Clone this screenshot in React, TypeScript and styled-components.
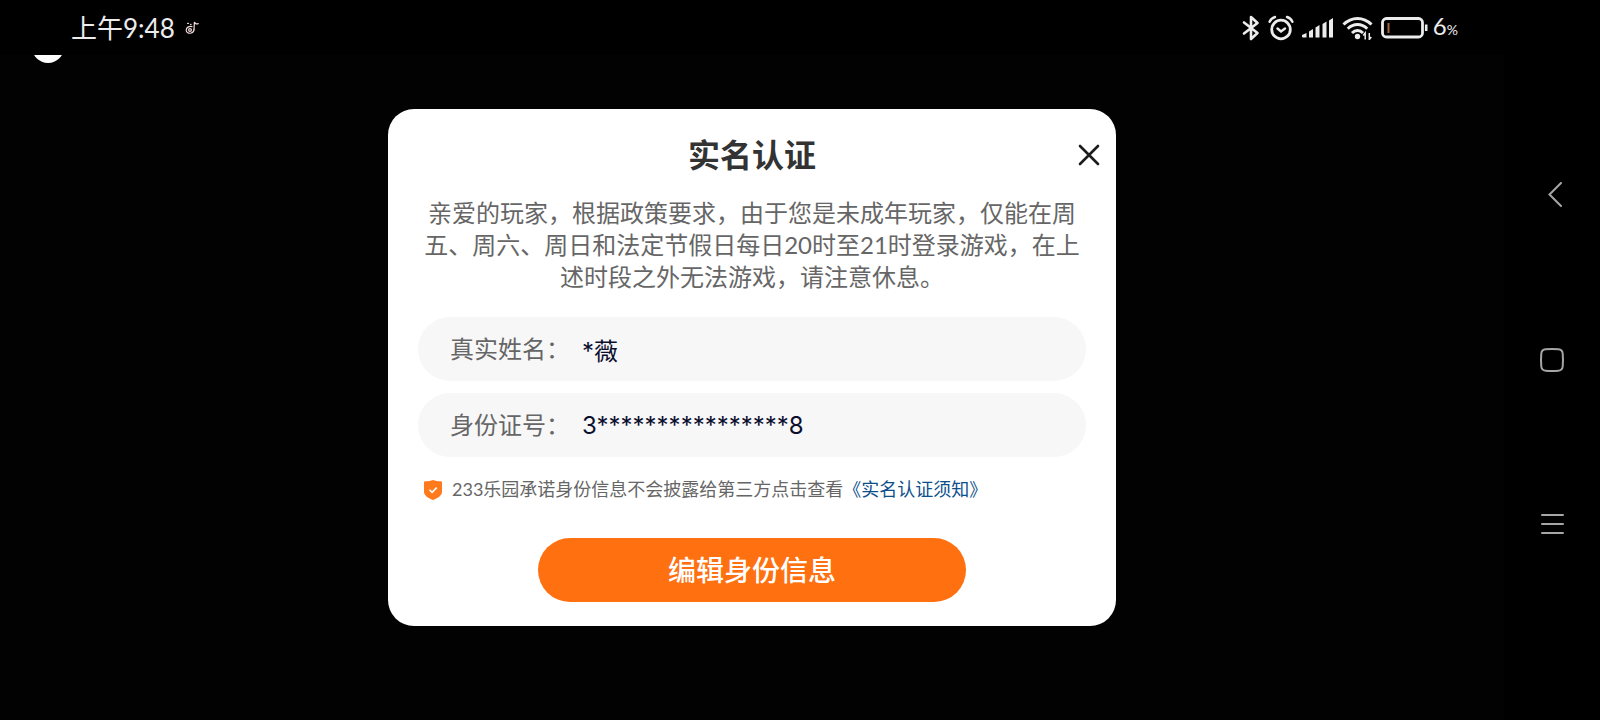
import React from 'react';
import styled, { createGlobalStyle } from 'styled-components';

const GlobalStyle = createGlobalStyle`
  *, *::before, *::after { box-sizing: border-box; }
  body {
    margin: 0;
    background: #000;
    font-family: Lato, "Noto Sans CJK SC", sans-serif;
  }
  button { font-family: inherit; }
`;

const Device = styled.div`
  display: flex;
  min-height: 100vh;
  background: #000;
`;

const Screen = styled.div`
  flex: 1;
  min-width: 0;
  display: flex;
  flex-direction: column;
`;

const StatusBar = styled.header`
  display: flex;
  align-items: center;
  justify-content: space-between;
  height: 55px;
  padding: 0 46px 0 71px;
  color: #ececec;
`;

const StatusGroup = styled.div<{ $gap: number }>`
  display: flex;
  align-items: center;
  gap: ${({ $gap }) => $gap}px;
`;

const Clock = styled.time`
  font-size: 26px;
  line-height: 32px;
`;

const BatteryLevel = styled.span`
  font-size: 24px;
  line-height: 32px;
`;

const PercentSign = styled.small`
  font-size: 14px;
`;

const Stage = styled.main`
  position: relative;
  flex: 1;
  display: flex;
  align-items: center;
  justify-content: center;
  padding: 0 24px 40px;
  overflow: hidden;
  background: #020202;
`;

const FloatingBall = styled.span`
  position: absolute;
  top: -24px;
  left: 32px;
  width: 32px;
  height: 32px;
  border-radius: 50%;
  background: #fff;
`;

const Dialog = styled.section`
  width: 100%;
  max-width: 728px;
  padding: 24px 0;
  border-radius: 26px;
  background: #fff;
`;

const DialogHeader = styled.div`
  display: grid;
  grid-template-columns: 1fr auto 1fr;
  align-items: center;
  padding: 0 12px;
`;

const Title = styled.h1`
  grid-column: 2;
  margin: 0;
  color: #333;
  font-size: 32px;
  font-weight: 700;
  line-height: 44px;
`;

const IconButton = styled.button<{ $size: number }>`
  display: flex;
  align-items: center;
  justify-content: center;
  width: ${({ $size }) => $size}px;
  height: ${({ $size }) => $size}px;
  padding: 0;
  border: 0;
  background: none;
  color: inherit;
  cursor: pointer;
`;

const CloseButton = styled(IconButton)`
  justify-self: end;
  color: #1c1c1c;
`;

const DialogBody = styled.form`
  display: flex;
  flex-direction: column;
  padding: 20px 30px 0;
`;

const Notice = styled.p`
  margin: 0 0 24px;
  color: #666;
  font-size: 24px;
  line-height: 32px;
  text-align: center;
`;

const Fields = styled.div`
  display: flex;
  flex-direction: column;
  gap: 12px;
`;

const Field = styled.label`
  display: flex;
  align-items: center;
  gap: 12px;
  height: 64px;
  padding: 0 32px;
  border-radius: 32px;
  background: #f7f7f8;
  color: #666;
  font-size: 24px;
  line-height: 32px;
`;

const FieldInput = styled.input`
  flex: 1;
  min-width: 0;
  height: 32px;
  padding: 0;
  border: 0;
  outline: 0;
  background: none;
  color: #0b0f2e;
  font-family: Inter, "Noto Sans CJK SC", sans-serif;
  font-size: 24px;
`;

const PrivacyPledge = styled.div`
  display: flex;
  align-items: center;
  gap: 10px;
  margin-top: 20px;
  padding-left: 6px;
  color: #666;
  font-size: 18px;
  line-height: 25px;
`;

const TermsLink = styled.a`
  color: #0d4f8b;
  text-decoration: none;
`;

const SubmitButton = styled.button`
  align-self: center;
  width: 100%;
  max-width: 428px;
  height: 64px;
  margin-top: 36px;
  border: 0;
  border-radius: 32px;
  background: #ff7011;
  color: #fff;
  font-size: 28px;
  font-weight: 500;
  line-height: 36px;
  cursor: pointer;
`;

const SystemNav = styled.nav`
  display: flex;
  flex: none;
  flex-direction: column;
  align-items: center;
  justify-content: center;
  gap: 117px;
  width: 96px;
  color: #a6a6a6;
`;

const NoteIcon = () => (
  <svg width="14" height="14" viewBox="0 0 14 14" fill="none" stroke="#f3dcdc" strokeWidth="1.2" strokeLinecap="round">
    <path d="M9 8.500 9.400 1c.4 1.500 1.800 2.200 3.800 1.600" />
    <path d="M7 5.600C4 4.800 1.200 6.600 1.200 9.200c0 2.400 2.600 3.600 5 2.800C8 11.400 9 10 9 8.500" />
    <circle cx="5" cy="9" r="1.400" />
    <path d="M2.600 2.400h.8M5.600 3.400h.4" />
  </svg>
);

const BluetoothIcon = () => (
  <svg width="18" height="26" viewBox="0 0 18 26" fill="none" stroke="currentColor" strokeWidth="2.600" strokeLinejoin="round" strokeLinecap="round">
    <path d="M2 7.500 15.500 18 9 24V2l6.500 6L2 18.500" />
  </svg>
);

const AlarmIcon = () => (
  <svg width="26" height="26" viewBox="0 0 26 26" fill="none" stroke="currentColor" strokeWidth="2.800" strokeLinecap="round">
    <circle cx="13" cy="14.500" r="9.300" />
    <path d="m9.500 13.500 3.500 3 4-3" strokeWidth="2.400" />
    <path d="M1.600 6.800C2.600 4.400 4.400 2.800 7 2M24.400 6.800C23.400 4.400 21.600 2.800 19 2" strokeWidth="2.400" />
  </svg>
);

const SignalIcon = () => (
  <svg width="32" height="20" viewBox="0 0 32 20" fill="currentColor">
    <path d="M0 18.500v-1.500l4.500-2v4.500H1a1 1 0 0 1-1-1Z" />
    <path d="M7 13.500 11 11v8.500H7Z" />
    <path d="M13.500 9.500 17.500 7v12.500h-4Z" />
    <path d="M20.500 6 24.500 3.500v16h-4Z" />
    <path d="M27 2.500 31 0v19.500h-4Z" />
  </svg>
);

const WifiIcon = () => (
  <svg width="31" height="24" viewBox="0 0 31 24" fill="none" stroke="currentColor" strokeWidth="3">
    <path d="M1.500 8.500C9.500.4 21.500.4 29.500 8.500" />
    <path d="M5.800 12.800C11.500 7.200 19.500 7.200 25.200 12.800" />
    <path d="M10 17c3.200-3.200 7.800-3.200 11 0" />
    <circle cx="15.500" cy="20.500" r="2.700" fill="currentColor" stroke="none" />
    <path d="M23.200 23.500V17l-2 2.500M27.300 17v6.500l2-2.500" strokeWidth="1.500" />
  </svg>
);

const BatteryIcon = () => (
  <svg width="47" height="22" viewBox="0 0 47 22" fill="none">
    <rect x="1.500" y="1.500" width="40" height="18.500" rx="4" stroke="currentColor" strokeWidth="2.800" />
    <rect x="6.500" y="6" width="2" height="10" fill="#a3653f" />
    <path d="M45.200 7.500v6.500" stroke="currentColor" strokeWidth="2.600" />
  </svg>
);

const CloseIcon = () => (
  <svg width="22" height="22" viewBox="0 0 22 22" fill="none" stroke="currentColor" strokeWidth="2.600" strokeLinecap="round">
    <path d="m2 2 18 18M20 2 2 20" />
  </svg>
);

const ShieldIcon = () => (
  <svg width="18" height="20" viewBox="0 0 18 20" fill="none">
    <path d="M9 0C11 .9 13.500 1.200 16.500 1.200c.9 0 1.500.5 1.500 1.400V11.500c0 4-3.600 6.300-9 8.500-5.400-2.200-9-4.500-9-8.500V2.600c0-.9.600-1.400 1.500-1.400C4.500 1.200 7 .9 9 0Z" fill="#ff7a1c" />
    <path d="m5.500 9.800 2.600 2.600 4.600-4.800" stroke="#fff" strokeWidth="1.600" />
  </svg>
);

const BackIcon = () => (
  <svg width="26" height="26" viewBox="0 0 26 26" fill="none" stroke="currentColor" strokeWidth="2" strokeLinecap="round">
    <path d="M22 1 10.500 12.500 22 24" />
  </svg>
);

const HomeIcon = () => (
  <svg width="26" height="26" viewBox="0 0 26 26" fill="none" stroke="currentColor" strokeWidth="2">
    <path d="M6.500 2.300Q13 1.700 19.500 2.300 23.300 2.700 23.700 6.500 24.300 13 23.700 19.500 23.300 23.300 19.500 23.700 13 24.300 6.500 23.700 2.700 23.300 2.300 19.500 1.700 13 2.300 6.500 2.700 2.700 6.500 2.300Z" />
  </svg>
);

const MenuIcon = () => (
  <svg width="26" height="26" viewBox="0 0 26 26" fill="none" stroke="currentColor" strokeWidth="2" strokeLinecap="round">
    <path d="M3 3h21M3 12h21M3 21h21" />
  </svg>
);

export default function App() {
  return (
    <Device lang="zh-CN">
      <GlobalStyle />
      <Screen>
        <StatusBar>
          <StatusGroup $gap={10}>
            <Clock dateTime="09:48">上午9:48</Clock>
            <NoteIcon />
          </StatusGroup>
          <StatusGroup $gap={5}>
            <StatusGroup $gap={8}>
              <BluetoothIcon />
              <AlarmIcon />
              <SignalIcon />
              <WifiIcon />
              <BatteryIcon />
            </StatusGroup>
            <BatteryLevel>
              6<PercentSign>%</PercentSign>
            </BatteryLevel>
          </StatusGroup>
        </StatusBar>
        <Stage>
          <FloatingBall />
          <Dialog role="dialog" aria-labelledby="dialog-title">
            <DialogHeader>
              <Title id="dialog-title">实名认证</Title>
              <CloseButton $size={30} type="button" aria-label="关闭">
                <CloseIcon />
              </CloseButton>
            </DialogHeader>
            <DialogBody onSubmit={(event: React.FormEvent) => event.preventDefault()}>
              <Notice>
                亲爱的玩家，根据政策要求，由于您是未成年玩家，仅能在周五、周六、周日和法定节假日每日20时至21时登录游戏，在上述时段之外无法游戏，请注意休息。
              </Notice>
              <Fields>
                <Field htmlFor="real-name">
                  真实姓名：
                  <FieldInput id="real-name" type="text" defaultValue="*薇" readOnly />
                </Field>
                <Field htmlFor="id-number">
                  身份证号：
                  <FieldInput id="id-number" type="text" defaultValue="3****************8" readOnly />
                </Field>
              </Fields>
              <PrivacyPledge>
                <ShieldIcon />
                <span>
                  233乐园承诺身份信息不会披露给第三方点击查看
                  <TermsLink href="#terms">《实名认证须知》</TermsLink>
                </span>
              </PrivacyPledge>
              <SubmitButton type="submit">编辑身份信息</SubmitButton>
            </DialogBody>
          </Dialog>
        </Stage>
      </Screen>
      <SystemNav aria-label="系统导航">
        <IconButton $size={48} type="button" aria-label="返回">
          <BackIcon />
        </IconButton>
        <IconButton $size={48} type="button" aria-label="主屏幕">
          <HomeIcon />
        </IconButton>
        <IconButton $size={48} type="button" aria-label="最近任务">
          <MenuIcon />
        </IconButton>
      </SystemNav>
    </Device>
  );
}
